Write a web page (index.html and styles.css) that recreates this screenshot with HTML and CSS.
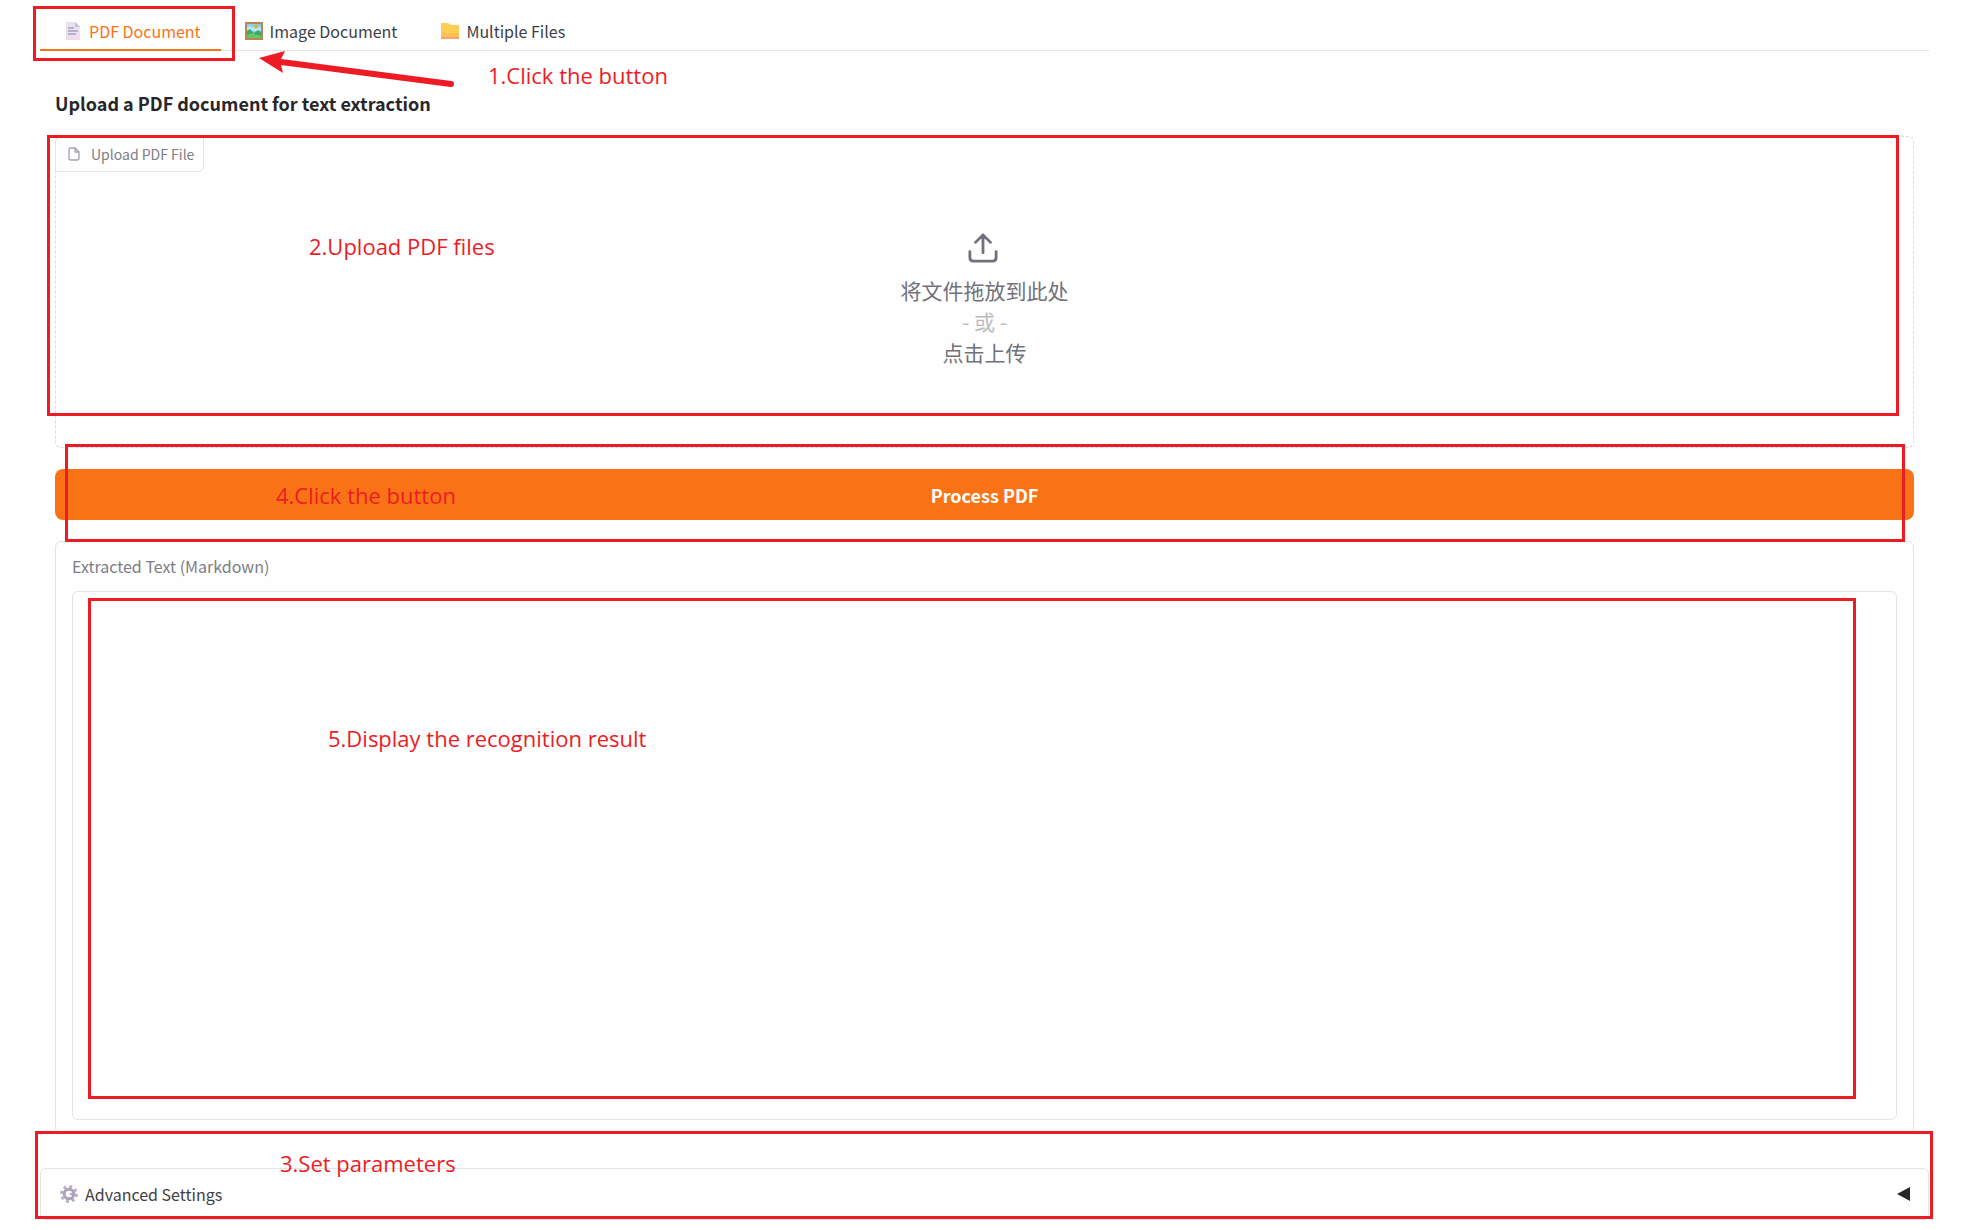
FILE: index.html
```html
<!DOCTYPE html>
<html lang="en">
<head>
<meta charset="utf-8">
<meta name="viewport" content="width=device-width, initial-scale=1">
<title>Document text extraction</title>
<link rel="stylesheet" href="styles.css">
</head>
<body>
<main class="app">
  <nav class="tabs" role="tablist">
    <button class="tab tab-active" type="button" role="tab" aria-selected="true">
      <svg class="emoji" viewBox="0 0 18 18" aria-hidden="true"><path d="M2 0h9l5 5v13H2z" fill="#e6e3ef"/><path d="M2 13h14v5H2z" fill="#f0dcea"/><path d="M11 0v5h5z" fill="#c5bfd4"/><path d="M4 6h6M4 9h10M4 12h8" stroke="#a9a2bd" stroke-width="1.4"/></svg>
      PDF Document
    </button>
    <button class="tab" type="button" role="tab" aria-selected="false">
      <svg class="emoji" viewBox="0 0 18 18" aria-hidden="true"><path d="M0 0h18v18H0z" fill="#b98555"/><path d="M2 2h14v14H2z" fill="#7fd4f7"/><path d="M2 5c3-2 5 1 7 0s5 1 7 0v4H2z" fill="#b5e8fb"/><circle cx="11" cy="4.500" r="1.900" fill="#f8a23a"/><path d="M2 9l3-2 4 4 4-3 3 2v6H2z" fill="#3fa66b"/><path d="M2 13l5-2 9 3v2H2z" fill="#63c860"/></svg>
      Image Document
    </button>
    <button class="tab" type="button" role="tab" aria-selected="false">
      <svg class="emoji" viewBox="0 0 18 18" aria-hidden="true"><path d="M0 2q0-1 1-1h6l3 2h7q1 0 1 1v12q0 1-1 1H1q-1 0-1-1z" fill="#ffce52"/><path d="M0 11h18v5q0 1-1 1H1q-1 0-1-1z" fill="#fcc057"/><path d="M0 15h18v1q0 1-1 1H1q-1 0-1-1z" fill="#f5a566"/></svg>
      Multiple Files
    </button>
    <span class="mark mark-tab"></span>
    <svg class="arrow" viewBox="0 0 200 40" aria-hidden="true"><path d="M22 12L192 34" stroke="#ed1c24" stroke-width="6" stroke-linecap="round"/><path d="M0 8L26 1L21 11L24 23z" fill="#ed1c24"/></svg>
    <span class="note note-tab">1.Click the button</span>
  </nav>

  <section class="panel">
    <h1 class="title">Upload a PDF document for text extraction</h1>

    <div class="upload">
      <label class="dropzone" for="pdf">
        <svg class="upload-icon" viewBox="0 0 32 32" aria-hidden="true"><path d="M2 20v6q0 4 4 4h20q4 0 4-4v-6M16 21V2M8 10l8-8 8 8" fill="none" stroke="currentColor" stroke-width="3" stroke-linecap="round" stroke-linejoin="round"/></svg>
        <span>将文件拖放到此处</span>
        <span class="or">- 或 -</span>
        <span>点击上传</span>
      </label>
      <input class="file" id="pdf" type="file" accept=".pdf">
      <span class="badge">
        <svg class="file-icon" viewBox="0 0 12 14" aria-hidden="true"><path d="M7 1H3Q1 1 1 3v8q0 2 2 2h6q2 0 2-2V5zM7 1v4h4" fill="none" stroke="currentColor" stroke-width="1.300" stroke-linejoin="round"/></svg>
        Upload PDF File
      </span>
      <span class="mark mark-upload"></span>
      <span class="note note-upload">2.Upload PDF files</span>
    </div>

    <div class="action">
      <button class="process" type="button">Process PDF</button>
      <span class="mark mark-action"></span>
      <span class="note note-action">4.Click the button</span>
    </div>

    <div class="result">
      <label class="result-label" for="result">Extracted Text (Markdown)</label>
      <div class="result-field">
        <textarea class="result-text" id="result"></textarea>
        <span class="mark mark-result"></span>
        <span class="note note-result">5.Display the recognition result</span>
      </div>
    </div>
  </section>

  <div class="settings">
    <button class="settings-toggle" type="button" aria-expanded="false">
      <svg class="emoji" viewBox="0 0 18 18" aria-hidden="true"><circle cx="9" cy="9" r="7.500" fill="none" stroke="#b8b1c6" stroke-width="3" stroke-dasharray="2.900 3"/><circle cx="9" cy="9" r="4.800" fill="none" stroke="#aaa3ba" stroke-width="3"/><path d="M9 9l4-2v4z" fill="#aaa3ba"/></svg>
      Advanced Settings
      <svg class="caret" viewBox="0 0 14 14" aria-hidden="true"><path d="M0 7L13 0v14z" fill="#27272a"/></svg>
    </button>
    <span class="mark mark-settings"></span>
    <span class="note note-settings">3.Set parameters</span>
  </div>
</main>
</body>
</html>
```
FILE: styles.css
```css
* { box-sizing: border-box; }

body {
  margin: 0;
  background: #fefefe;
  color: #3f3f46;
  font-family: "Noto Sans CJK SC", sans-serif;
  font-size: 16px;
  line-height: 24px;
}

button, textarea { font: inherit; color: inherit; }

.app { padding: 12px 51px 10px 40px; }

/* Tabs */
.tabs {
  position: relative;
  display: flex;
  border-bottom: 1px solid #e4e4e7;
}
.tab {
  display: flex;
  align-items: center;
  gap: 7px;
  height: 39px;
  margin-bottom: -1px;
  padding: 0 20px 0 24px;
  border: 0;
  border-bottom: 2px solid transparent;
  background: none;
  white-space: nowrap;
}
.tab-active { border-color: #f97316; color: #f97316; }
.emoji { width: 18px; height: 18px; flex: none; }

/* Panel */
.panel {
  display: flex;
  flex-direction: column;
  gap: 21px;
  padding: 40px 15px 0;
}
.title {
  margin: 0;
  color: #27272a;
  font-size: 18px;
  font-weight: 600;
  line-height: 24px;
}

/* Upload area */
.upload { position: relative; }
.dropzone {
  display: flex;
  flex-direction: column;
  align-items: center;
  justify-content: center;
  height: 312px;
  padding-top: 17px;
  border: 1px dashed #dcdce0;
  border-radius: 6px;
  color: #71717a;
  font-size: 21px;
  line-height: 31px;
}
.upload-icon { width: 30px; height: 30px; margin: 0 3px 12px 0; }
.or { color: #bbbbc2; }
.file {
  position: absolute;
  width: 1px;
  height: 1px;
  opacity: 0;
}
.badge {
  position: absolute;
  top: 0;
  left: 0;
  display: flex;
  align-items: center;
  gap: 11px;
  height: 36px;
  padding: 0 9px 0 12px;
  border: 1px solid #e4e4e7;
  border-radius: 6px 0;
  background: #fefefe;
  color: #7d7d86;
  font-size: 14px;
}
.file-icon { width: 12px; height: 14px; color: #a1a1aa; }

/* Process button */
.action { position: relative; display: flex; }
.process {
  flex: 1;
  height: 51px;
  border: 0;
  border-radius: 8px;
  background: #f97316;
  color: #fff;
  font-size: 18px;
  font-weight: 600;
}

/* Result */
.result {
  display: flex;
  flex-direction: column;
  gap: 13px;
  padding: 12px 16px 13px;
  border: 1px solid #e4e4e7;
  border-radius: 6px;
}
.result-label { color: #7d7d86; }
.result-field { position: relative; display: flex; }
.result-text {
  flex: 1;
  height: 529px;
  padding: 12px;
  border: 1px solid #e4e4e7;
  border-radius: 6px;
  background: none;
  resize: none;
}

/* Settings */
.settings { position: relative; margin-top: 34px; }
.settings-toggle {
  display: flex;
  align-items: center;
  gap: 7px;
  width: 100%;
  height: 52px;
  padding: 0 17px 0 19px;
  border: 1px solid #e4e4e7;
  border-radius: 6px;
  background: none;
}
.caret { width: 14px; height: 14px; margin-left: auto; }

/* Red guide marks laid over the interface */
.mark {
  position: absolute;
  border: 3px solid #ed1c24;
  pointer-events: none;
}
.mark-tab { left: -7px; top: -6px; width: 202px; height: 55px; }
.mark-upload { inset: -1px 15px 32px -8px; }
.mark-action { inset: -25px 9px -22px 10px; }
.mark-result { inset: 7px 41px 21px 16px; }
.mark-settings { inset: -37px -4px 1px -5px; }

.note {
  position: absolute;
  color: #ed1c24;
  font-family: "Open Sans", sans-serif;
  font-size: 22px;
  line-height: 30px;
  white-space: nowrap;
  pointer-events: none;
}
.note-tab { left: 448px; top: 48px; }
.note-upload { left: 254px; top: 95px; }
.note-action { left: 221px; top: 11px; }
.note-result { left: 256px; top: 132px; }
.note-settings { left: 240px; top: -20px; }

.arrow {
  position: absolute;
  left: 219px;
  top: 38px;
  width: 200px;
  height: 40px;
  fill: none;
}
```
